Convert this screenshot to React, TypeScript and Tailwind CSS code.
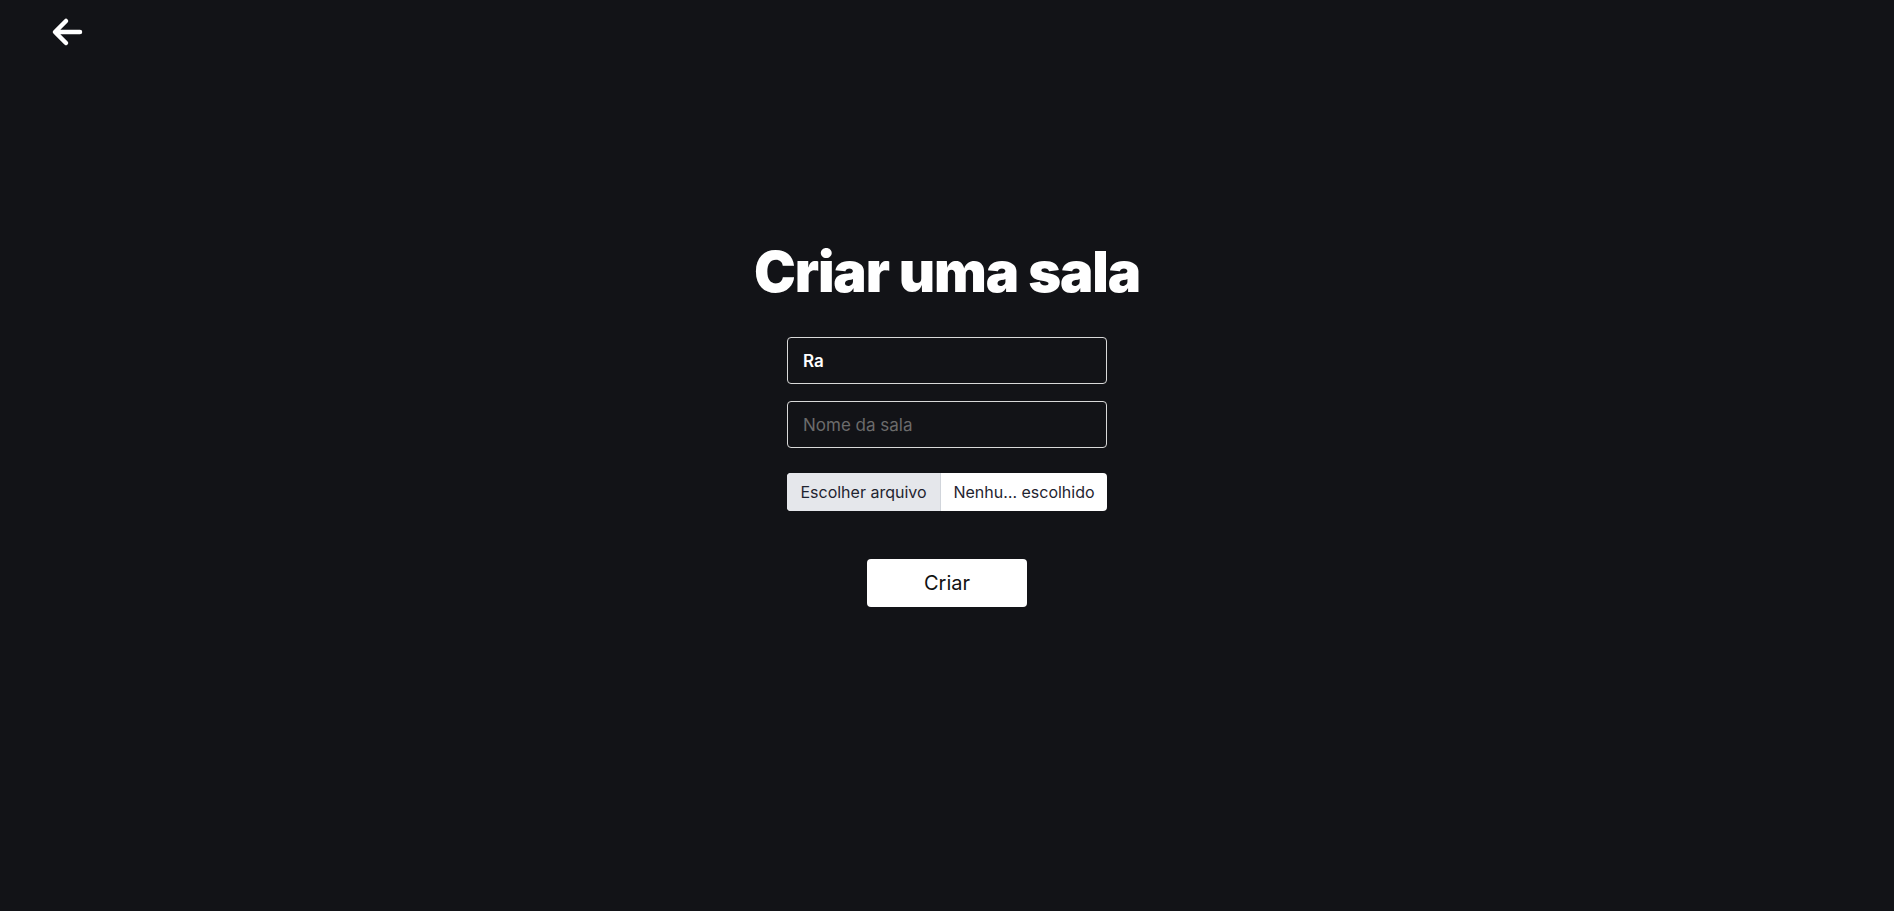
import React, { useState } from 'react';

export default function App() {
  const [roomName, setRoomName] = useState('');
  const [user, setUser] = useState('Ra');

  return (
    <div className="min-h-screen w-full bg-[#121317] font-['Inter',sans-serif] text-white">
      {/* Back */}
      <header className="h-[64px] pl-[51px] pt-[16px]">
        <button aria-label="Voltar" className="block">
          <svg width="32" height="32" viewBox="0 0 32 32" fill="none">
            <path
              d="M29 16H5M15 5L4 16L15 27"
              stroke="white"
              strokeWidth="4.5"
              strokeLinecap="round"
              strokeLinejoin="round"
            />
          </svg>
        </button>
      </header>

      <main className="flex flex-col items-center pt-[176px]">
        <h1 className="text-[56px] leading-[64px] font-black tracking-[-0.02em]">Criar uma sala</h1>

        <form className="mt-[33px] flex w-[320px] flex-col" onSubmit={(e) => e.preventDefault()}>
          <input
            value={user}
            onChange={(e) => setUser(e.target.value)}
            className="h-[47px] rounded-[4px] border border-[#d9d9d9] bg-transparent px-[15px] text-[17px] font-semibold text-white outline-none"
          />
          <input
            value={roomName}
            onChange={(e) => setRoomName(e.target.value)}
            placeholder="Nome da sala"
            className="mt-[17px] h-[47px] rounded-[4px] border border-[#d9d9d9] bg-transparent px-[15px] text-[17px] text-white outline-none placeholder:text-[#6b6b6b]"
          />

          <label className="mt-[25px] flex h-[38px] cursor-pointer overflow-hidden rounded-[4px] bg-white text-[16px] text-[#1f2430]">
            <span className="flex w-[154px] items-center justify-center border-r border-[#d1d5db] bg-[#e5e7eb]">
              Escolher arquivo
            </span>
            <span className="flex flex-1 items-center justify-center">Nenhu… escolhido</span>
            <input type="file" className="hidden" />
          </label>

          <button
            type="submit"
            className="mx-auto mt-[48px] h-[48px] w-[160px] rounded-[4px] bg-white text-[20px] text-[#111]"
          >
            Criar
          </button>
        </form>
      </main>
    </div>
  );
}
